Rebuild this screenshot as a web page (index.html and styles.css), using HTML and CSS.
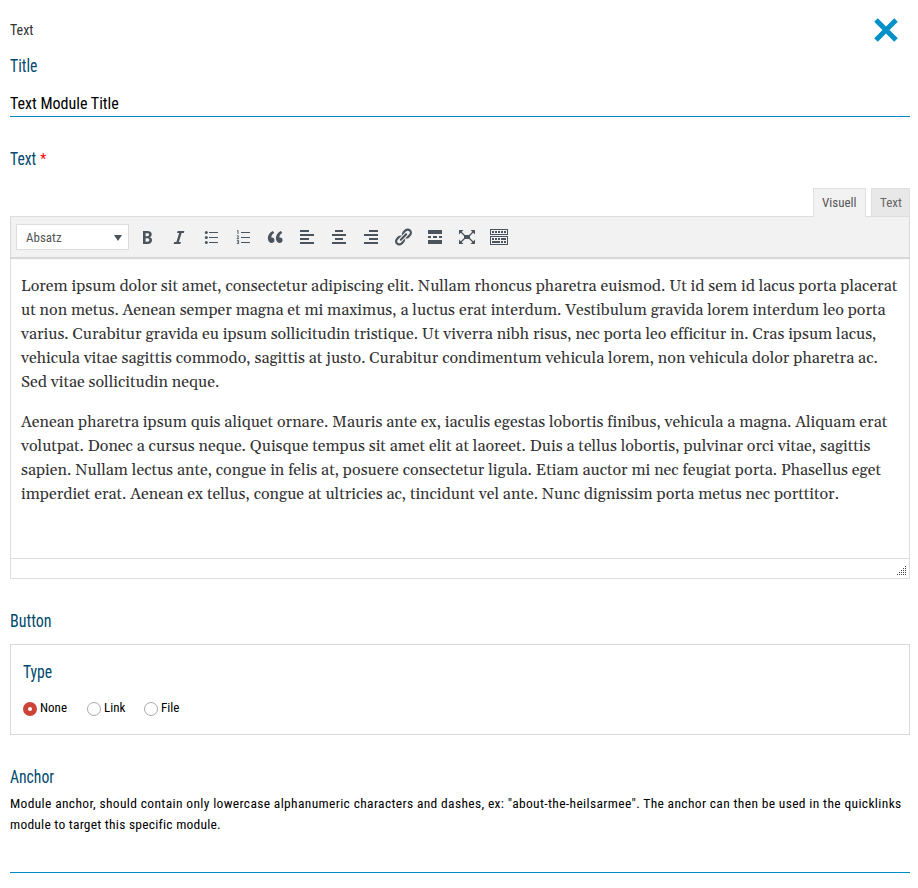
FILE: index.html
```html
<!DOCTYPE html>
<html lang="de">
<head>
<meta charset="utf-8">
<title>Text</title>
<link rel="stylesheet" href="styles.css">
</head>
<body>
<main class="module">
  <header class="head">
    <span class="name">Text</span>
    <svg class="close" viewBox="0 0 24 24"><path d="M2 2L22 22M22 2L2 22"/></svg>
  </header>

  <h2 class="label label-title"><span>Title</span></h2>
  <div class="input">Text Module Title</div>

  <h2 class="label label-text"><span>Text</span><em>*</em></h2>

  <section class="editor">
    <div class="tabs">
      <div class="tab active">Visuell</div>
      <div class="tab">Text</div>
    </div>
    <div class="frame">
      <div class="toolbar">
        <div class="select">Absatz<i class="caret"></i></div>
        <svg viewBox="0 0 20 20"><path d="M6 4v13h4.54c1.37 0 2.46-.33 3.26-1 .8-.66 1.2-1.58 1.2-2.77 0-.84-.17-1.51-.51-2.01s-.9-.85-1.67-1.03v-.09c.57-.1 1.02-.4 1.36-.9s.51-1.13.51-1.91c0-1.14-.39-1.98-1.17-2.5C12.75 4.26 11.5 4 9.78 4H6zm2.57 5.15V6.26h1.36c.73 0 1.27.11 1.61.32.34.22.51.58.51 1.07 0 .54-.16.92-.47 1.15s-.82.35-1.51.35h-1.5zm0 2.19h1.6c1.44 0 2.16.53 2.16 1.61 0 .6-.17 1.05-.51 1.34s-.86.43-1.57.43H8.57v-3.38z"/></svg>
        <svg viewBox="0 0 20 20"><path d="M14.78 6h-2.13l-2.8 9h2.12l-.62 2H4.6l.62-2h2.14l2.8-9H8.03l.62-2h6.75z"/></svg>
        <svg viewBox="0 0 20 20"><circle cx="5.3" cy="5.5" r="1.5"/><circle cx="5.3" cy="10.5" r="1.5"/><circle cx="5.3" cy="15.5" r="1.5"/><path d="M8 5h9v1H8zM8 10h9v1H8zM8 15h9v1H8z"/></svg>
        <svg viewBox="0 0 20 20"><path d="M8 5h9v1H8zM8 10h9v1H8zM8 15h9v1H8z"/><path class="thin" d="M4 4l1-.6V7M3.8 8.8h1.6v1.2L4 11.6h2M3.8 13.4h1.8v3.2H3.8M4.2 15h1.4"/></svg>
        <svg viewBox="0 0 20 20"><path d="M9.49 13.22c0-.74-.2-1.38-.61-1.9-.62-.78-1.83-.88-2.53-.72-.29-1.65 1.11-3.75 2.92-4.65L7.88 4c-2.73 1.3-5.42 4.28-4.96 8.05C3.21 14.43 4.59 16 6.54 16c.85 0 1.56-.25 2.12-.75s.83-1.18.83-2.03zm8.05 0c0-.74-.2-1.38-.61-1.9-.63-.78-1.83-.88-2.53-.72-.29-1.65 1.11-3.75 2.92-4.65L15.93 4c-2.73 1.3-5.41 4.28-4.95 8.05.29 2.38 1.66 3.95 3.61 3.95.85 0 1.56-.25 2.12-.75s.83-1.18.83-2.03z"/></svg>
        <svg viewBox="0 0 20 20"><path d="M3 3h9v2H3zM3 7h14v2H3zM3 11h9v2H3zM3 15h14v2H3z"/></svg>
        <svg viewBox="0 0 20 20"><path d="M6 3h8v2H6zM3 7h14v2H3zM6 11h8v2H6zM3 15h14v2H3z"/></svg>
        <svg viewBox="0 0 20 20"><path d="M8 3h9v2H8zM3 7h14v2H3zM8 11h9v2H8zM3 15h14v2H3z"/></svg>
        <svg viewBox="0 0 20 20"><path d="M17.74 2.76c1.68 1.69 1.68 4.41 0 6.1l-1.53 1.52c-1.12 1.12-2.7 1.47-4.14 1.09l2.62-2.61.76-.77.76-.76c.84-.84.84-2.2 0-3.04-.84-.85-2.2-.85-3.04 0l-.77.76-3.38 3.38c-.37-1.44-.02-3.02 1.1-4.14l1.52-1.53c1.69-1.68 4.42-1.68 6.1 0zM8.59 13.43l5.34-5.34c.42-.42.42-1.1 0-1.52-.44-.43-1.13-.39-1.53 0l-5.33 5.34c-.42.42-.42 1.1 0 1.52.44.43 1.13.39 1.52 0zm-.76 2.29l4.14-4.15c.38 1.44.03 3.02-1.09 4.14l-1.52 1.53c-1.69 1.68-4.41 1.68-6.1 0-1.68-1.68-1.68-4.42 0-6.1l1.53-1.52c1.12-1.12 2.7-1.47 4.14-1.1l-4.14 4.15c-.85.84-.85 2.2 0 3.05.84.84 2.2.84 3.04 0z"/></svg>
        <svg viewBox="0 0 20 20"><path d="M17 7V3H3v4h14zM6 11V9H3v2h3zm6 0V9H8v2h4zm5 0V9h-3v2h3zm0 6v-4H3v4h14z"/></svg>
        <svg viewBox="0 0 20 20"><path d="M7 8h6v4H7zM2 3h4.500L2 7.500zM18 3v4.500L13.500 3zM2 17v-4.500L6.500 17zM18 17h-4.500L18 12.500z"/><path class="diagonal" d="M3 4l4.500 4.500M17 4l-4.500 4.500M3 16l4.500-4.500M17 16l-4.500-4.500"/></svg>
        <svg viewBox="0 0 20 20"><path d="M19 2v6H1V2h18zm-1 5V3H2v4h16zM5 4v2H3V4h2zm3 0v2H6V4h2zm3 0v2H9V4h2zm3 0v2h-2V4h2zm3 0v2h-2V4h2zm2 5v9H1V9h18zm-1 8v-7H2v7h16zM5 11v2H3v-2h2zm3 0v2H6v-2h2zm3 0v2H9v-2h2zm6 0v2h-5v-2h5zm-6 3v2H3v-2h8zm3 0v2h-2v-2h2zm3 0v2h-2v-2h2z"/></svg>
      </div>
      <div class="content">
        <p>Lorem ipsum dolor sit amet, consectetur adipiscing elit. Nullam rhoncus pharetra euismod. Ut id sem id lacus porta placerat<br>ut non metus. Aenean semper magna et mi maximus, a luctus erat interdum. Vestibulum gravida lorem interdum leo porta<br>varius. Curabitur gravida eu ipsum sollicitudin tristique. Ut viverra nibh risus, nec porta leo efficitur in. Cras ipsum lacus,<br>vehicula vitae sagittis commodo, sagittis at justo. Curabitur condimentum vehicula lorem, non vehicula dolor pharetra ac.<br>Sed vitae sollicitudin neque.</p>
        <p>Aenean pharetra ipsum quis aliquet ornare. Mauris ante ex, iaculis egestas lobortis finibus, vehicula a magna. Aliquam erat<br>volutpat. Donec a cursus neque. Quisque tempus sit amet elit at laoreet. Duis a tellus lobortis, pulvinar orci vitae, sagittis<br>sapien. Nullam lectus ante, congue in felis at, posuere consectetur ligula. Etiam auctor mi nec feugiat porta. Phasellus eget<br>imperdiet erat. Aenean ex tellus, congue at ultricies ac, tincidunt vel ante. Nunc dignissim porta metus nec porttitor.</p>
      </div>
      <div class="status">
        <svg viewBox="0 0 10 10"><path d="M8 0h1v1H8zM6 2h1v1H6zM8 2h1v1H8zM4 4h1v1H4zM6 4h1v1H6zM8 4h1v1H8zM2 6h1v1H2zM4 6h1v1H4zM6 6h1v1H6zM8 6h1v1H8zM0 8h1v1H0zM2 8h1v1H2zM4 8h1v1H4zM6 8h1v1H6zM8 8h1v1H8z"/></svg>
      </div>
    </div>
  </section>

  <h2 class="label label-button"><span>Button</span></h2>
  <section class="box">
    <h2 class="label"><span>Type</span></h2>
    <div class="radios">
      <label class="none"><i class="radio checked"></i>None</label>
      <label class="link"><i class="radio"></i>Link</label>
      <label><i class="radio"></i>File</label>
    </div>
  </section>

  <h2 class="label label-anchor"><span>Anchor</span></h2>
  <p class="help">Module anchor, should contain only lowercase alphanumeric characters and dashes, ex: "about-the-heilsarmee". The anchor can then be used in the quicklinks<br><span>module to target this specific module.</span></p>
  <div class="input empty"></div>
</main>
</body>
</html>
```
FILE: styles.css
```css
* { box-sizing: border-box; margin: 0; padding: 0; }

body {
  background: #fff;
  color: #000;
  font: 13px/20px "Roboto Condensed", Roboto, sans-serif;
}

.module { width: 900px; margin: 0 0 0 10px; padding-top: 17px; }

.head { display: flex; justify-content: space-between; height: 37px; padding-right: 12px; }
.name { font-size: 14px; line-height: 26px; color: #333; }
.close { width: 24px; height: 24px; margin-top: 1px; fill: none; stroke: #0090c8; stroke-width: 5; }

.label { display: flex; height: 24px; font-size: 18px; line-height: 24px; font-weight: 400; color: #004a6e; }
.label span { transform: scaleX(.87); transform-origin: 0 0; }
.label-button span { transform: scaleX(.89); }
.label em { margin-left: 0; font-size: 14px; font-style: normal; color: #f00; }

.input { height: 39px; border-bottom: 1px solid #0088c4; font-size: 16px; line-height: 51px; }
.label-text { margin-top: 30px; }

.editor { margin-top: 17px; }
.tabs { display: flex; justify-content: flex-end; gap: 5px; height: 28px; }
.tab {
  height: 28px;
  padding: 0 8px;
  border: 1px solid #e0e0e0;
  border-bottom: 0;
  background: #e8e8e8;
  color: #666;
  font-size: 13px;
  line-height: 28px;
}
.tab:not(.active) { width: 39px; }
.tab.active { position: relative; z-index: 1; width: 53px; height: 29px; background: #f2f2f2; color: #555; }

.frame { border: 1px solid #dedede; }
.toolbar {
  display: flex;
  align-items: flex-start;
  gap: 12px;
  height: 41px;
  padding: 7px 5px 0;
  border-bottom: 1px solid #d8d8d8;
  background: #f2f2f2;
  box-shadow: 0 1px 1px rgba(0, 0, 0, .15);
}
.toolbar svg { width: 20px; height: 20px; margin-top: 3px; fill: #4b545c; }
.toolbar .thin { fill: none; stroke: #4b545c; stroke-width: .9; }
.toolbar .diagonal { fill: none; stroke: #4b545c; stroke-width: 1.3; }
.select {
  display: flex;
  align-items: center;
  justify-content: space-between;
  width: 113px;
  height: 26px;
  margin-right: -4px;
  padding: 1px 6px 0 9px;
  border: 1px solid #ddd;
  background: #fff;
  color: #555;
}
.caret { border: 4px solid transparent; border-top: 6px solid #4b545c; border-bottom: 0; }

.content {
  height: 300px;
  padding: 16px 10px 0;
  font: 16px/24px Gelasio, Georgia, serif;
  font-variant-ligatures: none;
  color: #333;
  white-space: nowrap;
}
.content p + p { margin-top: 16px; }
.status { display: flex; justify-content: flex-end; height: 20px; padding: 7px 2px 0 0; border-top: 1px solid #dedede; }
.status svg { width: 10px; height: 10px; fill: #444; }

.label-button { margin-top: 30px; }
.box { height: 91px; margin-top: 11px; padding: 15px 12px 0; border: 1px solid #d9d9d9; }
.radios { display: flex; margin-top: 14px; line-height: 20px; }
.radios label { display: flex; gap: 3px; }
.none { width: 64px; }
.link { width: 57px; }
.radio { width: 14px; height: 14px; margin-top: 4px; border: 1px solid #aaa; border-radius: 50%; }
.radio.checked { border: 5px solid #cb4437; }

.label-anchor { margin-top: 30px; }
.help { margin-top: 4px; font-size: 13.5px; line-height: 21px; letter-spacing: .345px; white-space: nowrap; }
.help span { letter-spacing: .23px; }
.empty { height: 38px; }
```
